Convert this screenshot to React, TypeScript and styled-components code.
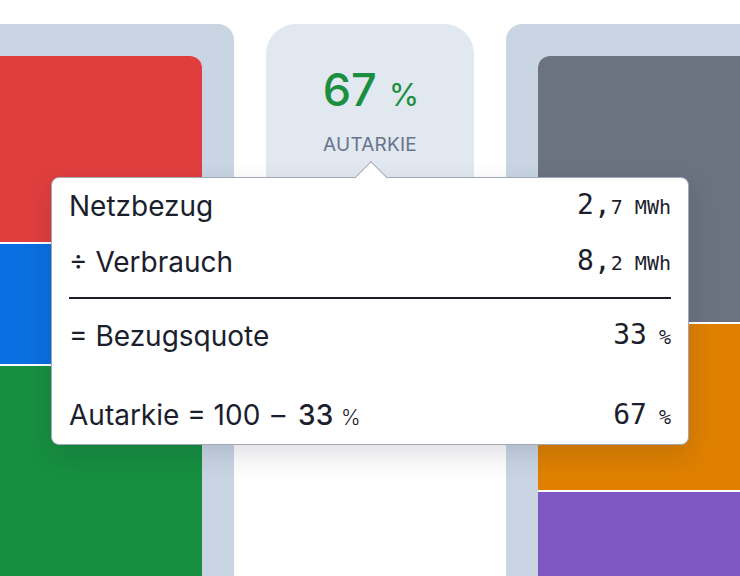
import React from 'react';
import styled, { createGlobalStyle } from 'styled-components';

const GlobalStyle = createGlobalStyle`
  html, body {
    margin: 0;
    padding: 0;
    background: #ffffff;
    font-family: Inter, "Noto Sans", sans-serif;
  }
`;

const Stage = styled.div`
  position: relative;
  display: flex;
  gap: 32px;
  width: 740px;
  height: 576px;
  padding-top: 24px;
  box-sizing: border-box;
  overflow: hidden;
`;

const Panel = styled.div<{ $side: 'left' | 'right' }>`
  flex: 0 0 234px;
  display: flex;
  background: #c9d5e3;
  box-sizing: border-box;
  padding: ${p => (p.$side === 'left' ? '32px 32px 0 0' : '32px 0 0 32px')};
  border-radius: ${p => (p.$side === 'left' ? '0 16px 0 0' : '16px 0 0 0')};
`;

const Stack = styled.div<{ $side: 'left' | 'right' }>`
  flex: 1;
  display: flex;
  flex-direction: column;
  gap: 2px;
  background: #ffffff;
  overflow: hidden;
  border-radius: ${p => (p.$side === 'left' ? '0 12px 0 0' : '12px 0 0 0')};
`;

const Segment = styled.div<{ $color: string; $size?: number }>`
  background: ${p => p.$color};
  flex: ${p => (p.$size ? `0 0 ${p.$size}px` : '1')};
`;

const Card = styled.div`
  flex: 0 0 208px;
  height: 300px;
  background: #e2e8f0;
  border-radius: 30px 30px 0 0;
  padding-top: 40px;
  box-sizing: border-box;
  text-align: center;
`;

const Big = styled.div`
  color: #1b8f3f;
  font-size: 45px;
  font-weight: 500;
  line-height: 52px;
  padding-left: 2px;
`;

const BigUnit = styled.span`
  font-size: 31px;
  font-weight: 400;
  margin-left: 12px;
`;

const Caption = styled.div`
  margin-top: 12px;
  color: #68738d;
  font-size: 19px;
  line-height: 24px;
  letter-spacing: 0.2px;
`;

const Tooltip = styled.div`
  position: absolute;
  left: 51px;
  top: 177px;
  width: 638px;
  box-sizing: border-box;
  background: #ffffff;
  border: 1px solid #a3a8b6;
  border-radius: 8px;
  padding: 0 17px;
  box-shadow: 0 10px 28px rgba(20, 30, 50, 0.14);
  color: #1b1e2d;

  &::before {
    content: '';
    position: absolute;
    left: 307px;
    top: -12px;
    width: 23px;
    height: 23px;
    background: #ffffff;
    border-left: 1px solid #a3a8b6;
    border-top: 1px solid #a3a8b6;
    transform: rotate(45deg);
  }
`;

const Row = styled.div<{ $gap?: number }>`
  display: flex;
  justify-content: space-between;
  align-items: center;
  height: 56px;
  margin-top: ${p => p.$gap ?? 0}px;
  font-size: 28px;
  line-height: 56px;
  white-space: pre;
`;

const Rule = styled.div`
  height: 2px;
  margin-top: 7px;
  background: #1b1e2d;
`;

const Value = styled.span`
  font-family: "DejaVu Sans Mono", "Liberation Mono", monospace;
  font-size: 28px;
`;

const Small = styled.span`
  font-size: 20px;
`;

const Dash = styled.span`
  margin: 0 5px 0 3px;
`;

const Strong = styled.span`
  font-weight: 500;
`;

const Unit = styled.span`
  font-size: 21px;
  font-weight: 300;
`;

export default function App() {
  return (
    <>
      <GlobalStyle />
      <Stage>
        <Panel $side="left">
          <Stack $side="left">
            <Segment $color="#e03e3e" $size={186} />
            <Segment $color="#0a6fe0" $size={120} />
            <Segment $color="#178f40" />
          </Stack>
        </Panel>

        <Card>
          <Big>
            67<BigUnit>%</BigUnit>
          </Big>
          <Caption>AUTARKIE</Caption>
        </Card>

        <Panel $side="right">
          <Stack $side="right">
            <Segment $color="#6b7280" $size={266} />
            <Segment $color="#df8000" $size={166} />
            <Segment $color="#7e57c2" />
          </Stack>
        </Panel>

        <Tooltip>
          <Row>
            <span>Netzbezug</span>
            <Value>
              2,<Small>7 MWh</Small>
            </Value>
          </Row>
          <Row>
            <span>÷ Verbrauch</span>
            <Value>
              8,<Small>2 MWh</Small>
            </Value>
          </Row>
          <Rule />
          <Row $gap={9}>
            <span>= Bezugsquote</span>
            <Value>
              33<Small> %</Small>
            </Value>
          </Row>
          <Row $gap={24}>
            <span>
              Autarkie = 100 <Dash>–</Dash> <Strong>33</Strong> <Unit>%</Unit>
            </span>
            <Value>
              67<Small> %</Small>
            </Value>
          </Row>
        </Tooltip>
      </Stage>
    </>
  );
}
